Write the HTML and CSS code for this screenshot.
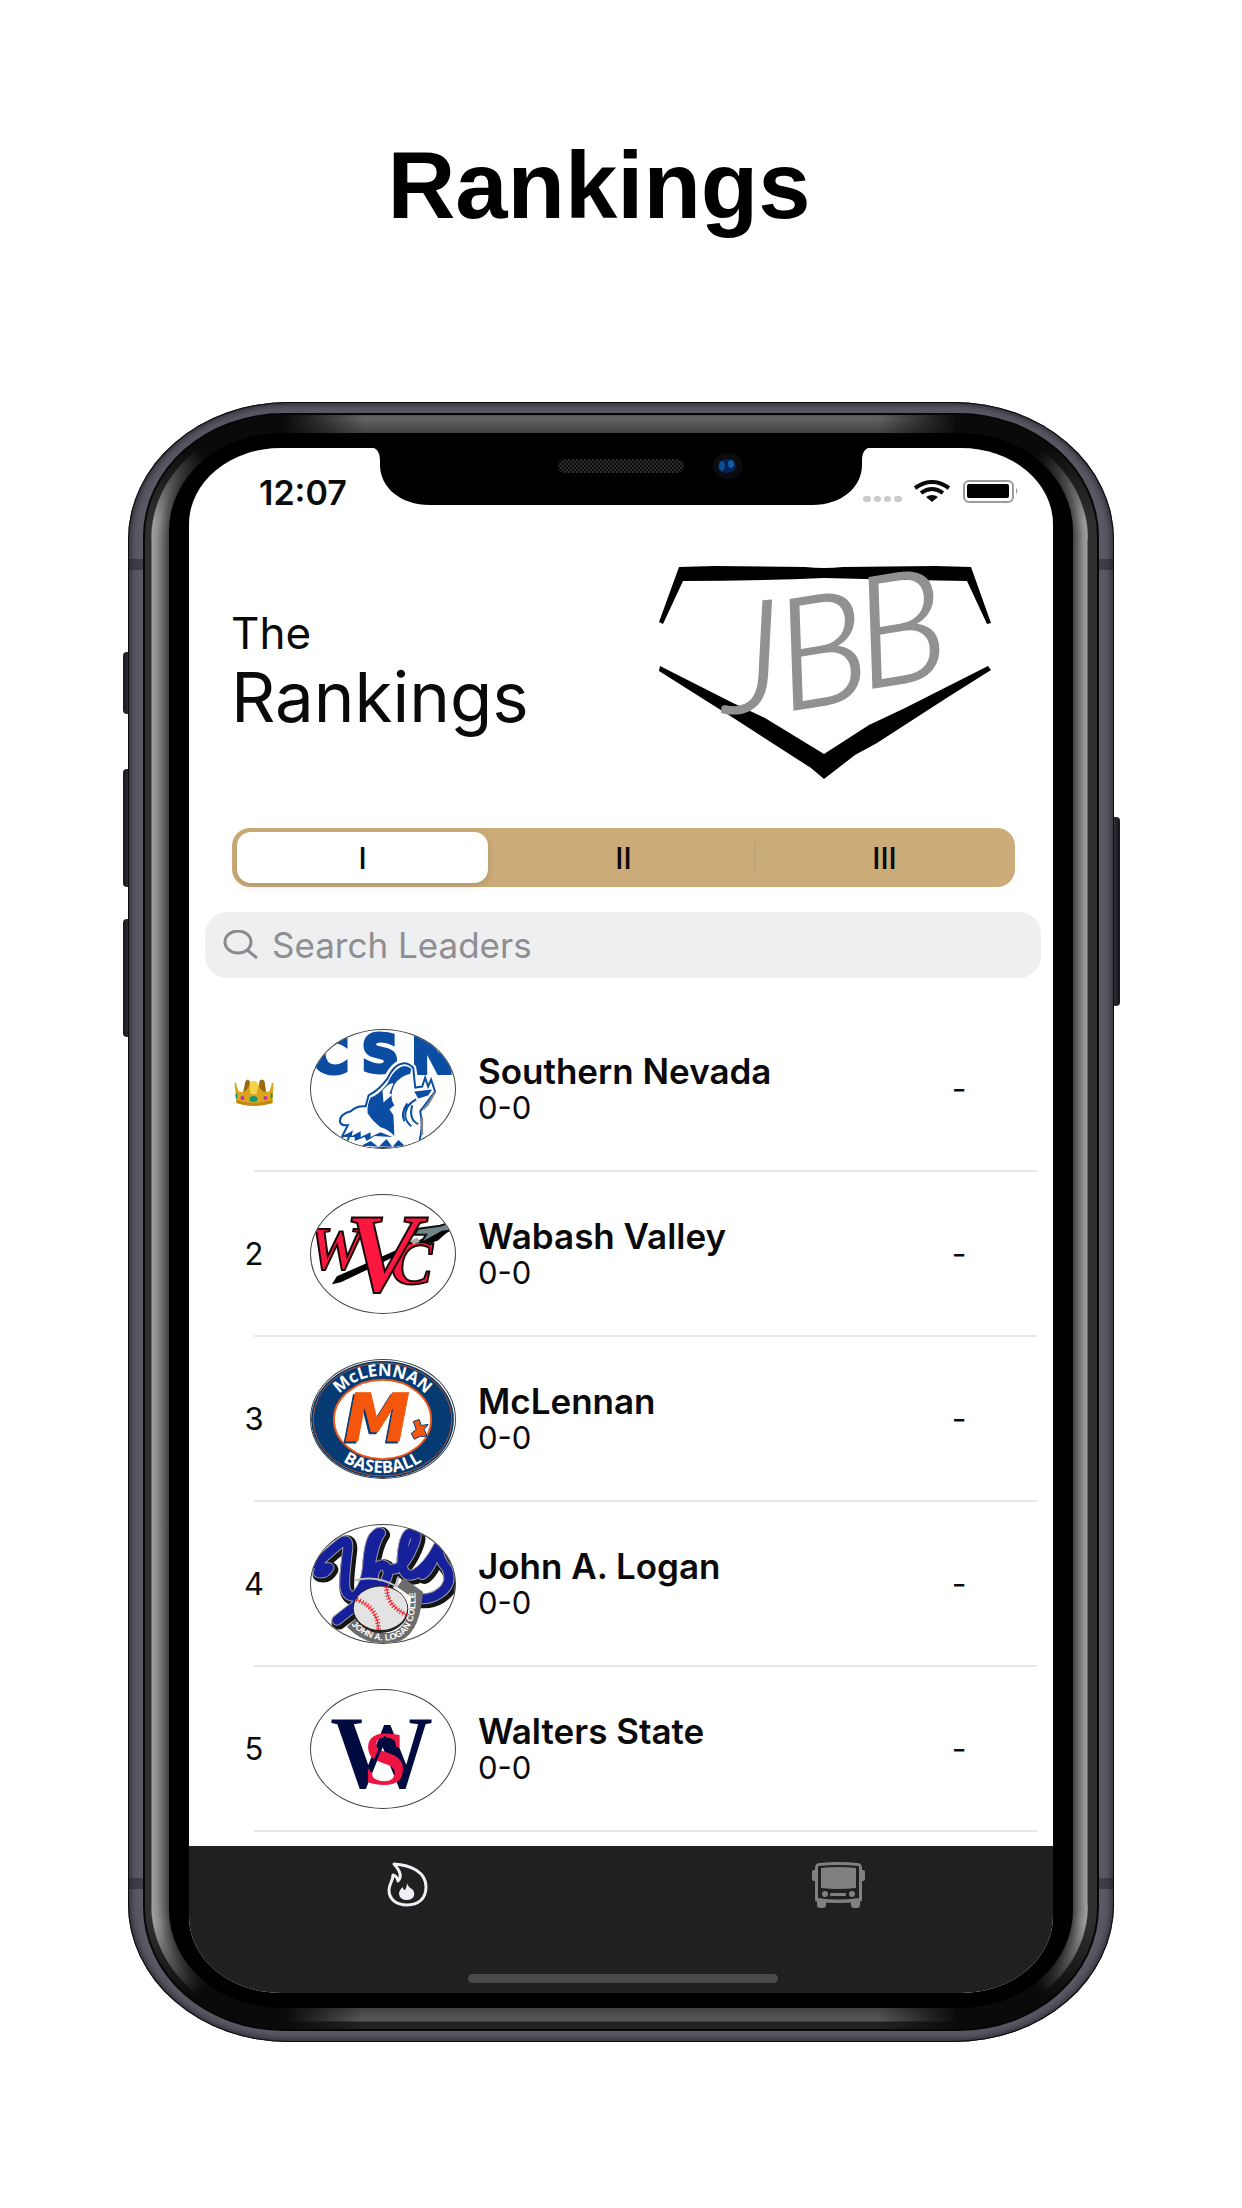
FILE: index.html
```html
<!DOCTYPE html>
<html lang="en">
<head>
<meta charset="utf-8">
<meta name="viewport" content="width=device-width, initial-scale=1">
<title>Rankings</title>
<link rel="stylesheet" href="styles.css">
</head>
<body>
<main class="stage">
  <h1 class="headline">Rankings</h1>
  <div class="phone">
    <span class="key key-mute"></span>
    <span class="key key-up"></span>
    <span class="key key-down"></span>
    <span class="key key-power"></span>
    <div class="metal">
      <span class="antenna antenna-top"></span>
      <span class="antenna antenna-bottom"></span>
      <div class="rim">
        <div class="bezel">
          <div class="screen">
            <svg class="notch" viewBox="0 0 506 58" aria-hidden="true">
              <defs>
                <pattern id="mesh" width="4" height="4" patternUnits="userSpaceOnUse">
                  <rect width="4" height="4" fill="#0c0c0c"/>
                  <rect width="2" height="2" fill="#2c2c2c"/>
                  <rect x="2" y="2" width="2" height="2" fill="#2c2c2c"/>
                </pattern>
              </defs>
              <path d="M0 0C8 0 12 4 12 14V18C12 40 32 58 62 58H444C474 58 494 40 494 18V14C494 4 498 0 506 0Z"/>
              <rect x="190" y="12" width="126" height="14" rx="7" fill="url(#mesh)"/>
              <ellipse cx="360" cy="19" rx="15" ry="13" fill="#0a0c10"/>
              <ellipse cx="359" cy="19" rx="9" ry="7" fill="#04224f"/>
              <ellipse cx="354" cy="19" rx="3" ry="5" fill="#0a4f96"/>
              <ellipse cx="363" cy="17" rx="3" ry="4" fill="#0d5cae"/>
            </svg>
            <header class="status">
              <time class="clock">12:07</time>
              <svg class="status-icons" viewBox="0 0 156 24" aria-hidden="true">
                <g fill="#cbcbcb">
                  <rect x="0" y="16" width="8" height="6" rx="3"/>
                  <rect x="11" y="16" width="7" height="6" rx="3"/>
                  <rect x="21" y="16" width="7" height="6" rx="3"/>
                  <rect x="31" y="16" width="8" height="6" rx="3"/>
                </g>
                <g fill="none" stroke="#0a0a0a" stroke-width="4">
                  <path d="M52 8Q69 -4 86 8"/>
                  <path d="M58 13Q69 5 80 13"/>
                </g>
                <path d="M63 17Q69 13 75 17L69 22Z" fill="#0a0a0a"/>
                <rect x="101" y="1" width="49" height="21" rx="5" fill="none" stroke="#9b9b9b" stroke-width="2"/>
                <rect x="104" y="4" width="42" height="14" rx="2"/>
                <path d="M153 8Q156 11 153 14Z" fill="#9b9b9b"/>
              </svg>
            </header>

            <section class="masthead">
              <h2 class="title"><span class="title-small">The</span> <span class="title-large">Rankings</span></h2>
              <svg class="brand" viewBox="0 0 340 216" role="img" aria-label="JBB">
                <path d="M24 2L60 1L150 2Q169 4 188 2L280 1L316 2L336 58L332 59L312 16Q240 15 169 13Q100 16 28 16L8 59L4 57Z"/>
                <path d="M5 101L78 138L110 153L169 189L214 160L250 143L333 101L336 105L290 134L222 178L200 190L169 214L156 203L80 154L4 106Z"/>
                <g class="brand-letters">
                  <text x="70" y="148" transform="rotate(-4 70 148)">J</text>
                  <text x="130" y="146" transform="rotate(-9 130 146)">B</text>
                  <text x="209" y="124" transform="rotate(-9 209 124)">B</text>
                </g>
              </svg>
            </section>

            <fieldset class="segments">
              <legend class="hidden">Division</legend>
              <label class="segment"><input type="radio" name="division" checked><span>I</span></label>
              <label class="segment"><input type="radio" name="division"><span>II</span></label>
              <label class="segment"><input type="radio" name="division"><span>III</span></label>
            </fieldset>

            <label class="search">
              <svg class="search-icon" viewBox="0 0 36 30" aria-hidden="true">
                <ellipse cx="15" cy="12" rx="13" ry="11"/>
                <path d="M24 20L34 28"/>
              </svg>
              <input type="search" placeholder="Search Leaders" aria-label="Search Leaders">
            </label>

            <ol class="teams">
              <li class="team">
                <span class="rank">
                  <svg class="crown" viewBox="0 0 41 28" role="img" aria-label="1">
                    <path d="M9 17L12 3Q15 0 16 3L19 13L25 13L26 3Q28 0 31 3L33 17Z" fill="#9a6a10"/>
                    <path d="M1 5Q3 4 3 7L5 13Q12 17 16 7Q17 3 20 3Q23 3 25 7Q29 17 36 13L38 7Q38 4 40 5L39 25Q20 31 3 25Z" fill="#dca51c"/>
                    <path d="M16 7Q17 3 20 3Q23 3 25 7L23 16H17Z" fill="#f8d44a"/>
                    <path d="M3 22Q20 28 39 22V25Q20 31 3 25Z" fill="#c08712"/>
                    <ellipse cx="20" cy="21" rx="4" ry="3" fill="#0f9a78"/>
                    <circle cx="9" cy="20" r="2" fill="#c22bb0"/><circle cx="32" cy="20" r="2" fill="#c22bb0"/>
                    <ellipse cx="3" cy="18" rx="1" ry="3" fill="#0f9a78"/><ellipse cx="38" cy="18" rx="1" ry="3" fill="#0f9a78"/>
                  </svg>
                </span>
                <svg class="logo" viewBox="0 0 145 119" role="img" aria-label="Southern Nevada logo">
                  <g class="csn"><text x="0" y="43">C</text><text x="51" y="42">S</text><text x="101" y="43">N</text></g>
                  <path d="M91 33Q83 35 76 49Q68 60 57 65L54 76Q46 76 40 82Q28 84 28 93Q28 98 35 98L30 108L40 104L36 114L50 119H108L111 80L124 60L121 50L117 58L115 47L112 56L106 58L103 38Q97 31 91 33Z" fill="#fff" stroke="#fff" stroke-width="6"/>
                  <path d="M91 34Q83 36 77 49Q69 60 58 66L55 77Q46 76 40 82Q29 85 29 92Q30 97 37 96L31 108L40 104L36 113L50 119H107Q114 100 110 82L125 62L121 50L118 57L115 48L112 57L105 58L103 38Q97 32 91 34Z" fill="#fff" stroke="#0b4da2" stroke-width="2"/>
                  <path d="M89 38Q82 42 77 54Q68 66 60 68Q56 76 57 84Q62 92 70 98Q78 100 84 107L83 86L79 80L84 76Q78 68 84 55Q90 46 100 44L101 39Q95 34 89 38Z" fill="#0b4da2"/>
                  <path d="M72 61Q80 52 83 54L79 64L82 65L73 73ZM32 89Q38 82 47 86L54 90L41 93Z" fill="#fff"/>
                  <path d="M104 62L122 60L118 66L108 69Z" fill="#0b4da2"/>
                  <path d="M106 70Q94 76 95 88Q97 94 101 97M97 74Q90 84 94 92M102 76Q98 90 108 95" fill="none" stroke="#0b4da2" stroke-width="2"/>
                  <path d="M33 108L42 101L41 107L50 102L50 108L60 103L60 108L70 103L82 108L64 107L56 112L54 108L44 112L44 108ZM50 117L60 112L68 118L76 110L82 118L88 111L96 118Z" fill="#0b4da2"/>
                  <path d="M125 63L118 75L113 80M112 88V106" fill="none" stroke="#888" stroke-width="2"/>
                </svg>
                <div class="details"><h3 class="name">Southern Nevada</h3><p class="record">0-0</p></div>
                <span class="move">-</span>
              </li>
              <li class="team">
                <span class="rank">2</span>
                <svg class="logo" viewBox="0 0 145 119" role="img" aria-label="Wabash Valley logo">
                  <path d="M21 90L26 82L128 37L118 46L30 88Z"/>
                  <g class="wvc">
                    <text x="-3" y="75" font-size="62">W</text>
                    <text x="80" y="90" font-size="64">C</text>
                    <text x="34" y="97" font-size="114">V</text>
                  </g>
                  <path d="M108 34L130 31L143 27L146 32L128 42L120 50L112 46L116 40L104 40Z" fill="#6f8588" stroke="#111" stroke-width="2"/>
                  <path d="M114 46L132 36L140 35L128 46L118 49Z"/>
                  <path d="M100 46L107 43L110 47L103 50Z" fill="#aaa"/>
                </svg>
                <div class="details"><h3 class="name">Wabash Valley</h3><p class="record">0-0</p></div>
                <span class="move">-</span>
              </li>
              <li class="team">
                <span class="rank">3</span>
                <svg class="logo" viewBox="0 0 145 119" role="img" aria-label="McLennan Baseball logo">
                  <defs>
                    <path id="ring-top" d="M19 60A53 44 0 0 1 125 60"/>
                    <path id="ring-bottom" d="M8 60A64 54 0 0 0 136 60"/>
                  </defs>
                  <ellipse cx="72" cy="60" rx="72" ry="59" fill="#053a73"/>
                  <ellipse cx="72" cy="60" rx="70" ry="57" fill="none" stroke="#b8542a" stroke-width="1"/>
                  <ellipse cx="72" cy="60" rx="49" ry="40" fill="#fff" stroke="#e8561a" stroke-width="2"/>
                  <g class="ring-text">
                    <text><textPath href="#ring-top" startOffset="50%">McLENNAN</textPath></text>
                    <text><textPath href="#ring-bottom" startOffset="50%">BASEBALL</textPath></text>
                  </g>
                  <g class="letter-m">
                    <text x="32" y="84" fill="#053a73" stroke="#053a73">M</text>
                    <text x="34" y="82" fill="#f4570b" stroke="#f4570b">M</text>
                  </g>
                  <path d="M103 62L109 60L111 66L118 65L114 70L117 77L110 77L104 80L101 74L106 70Z" fill="#f4570b" stroke="#053a73" stroke-width="1"/>
                </svg>
                <div class="details"><h3 class="name">McLennan</h3><p class="record">0-0</p></div>
                <span class="move">-</span>
              </li>
              <li class="team">
                <span class="rank">4</span>
                <svg class="logo" viewBox="0 0 145 119" role="img" aria-label="John A. Logan College Vols logo">
                  <defs>
                    <path id="badge" d="M39 99Q58 119 80 116Q108 111 105 66"/>
                    <path id="vols" d="M7 48Q14 50 18 43Q4 44 7 38Q20 26 30 18Q38 12 37 24Q34 48 34 56Q33 72 43 72Q54 66 57 42Q58 20 63 12Q68 6 70 8Q62 20 58 52Q54 72 44 82L26 96M64 62Q60 42 72 40Q82 44 74 58Q68 66 64 58M78 44Q90 48 100 28Q110 8 103 8Q94 6 92 30Q90 54 104 50Q118 42 128 22Q120 46 112 50M128 22Q128 34 137 44Q144 60 128 70Q118 76 106 74"/>
                  </defs>
                  <g fill="none" stroke-linecap="round" stroke-linejoin="round">
                    <use href="#vols" x="2" y="2" stroke="#151515" stroke-width="15"/>
                    <use href="#vols" stroke="#9a9aa4" stroke-width="11"/>
                    <use href="#vols" stroke="#17209b" stroke-width="9"/>
                  </g>
                  <path d="M40 99Q58 117 80 114Q104 111 107 70L90 58" fill="none" stroke="#6c6c6c" stroke-width="11"/>
                  <ellipse cx="70" cy="85" rx="28" ry="24" fill="#222"/>
                  <ellipse cx="70" cy="84" rx="27" ry="22" fill="#e3e3e3"/>
                  <path d="M46 75Q68 84 68 106M76 62Q76 82 97 91" fill="none" stroke="#f01824" stroke-width="1"/>
                  <path d="M46 75Q68 84 68 106M76 62Q76 82 97 91" fill="none" stroke="#f01824" stroke-width="5" stroke-dasharray="1 2"/>
                  <path d="M44 56Q66 50 86 62L88 52" fill="none" stroke="#bdbdc4" stroke-width="2"/>
                  <text class="badge-text"><textPath href="#badge" startOffset="2">JOHN A. LOGAN COLLEGE</textPath></text>
                </svg>
                <div class="details"><h3 class="name">John A. Logan</h3><p class="record">0-0</p></div>
                <span class="move">-</span>
              </li>
              <li class="team">
                <span class="rank">5</span>
                <svg class="logo" viewBox="0 0 145 119" role="img" aria-label="Walters State logo">
                  <g class="ws">
                    <text x="19" y="98" font-size="104" fill="#020b40">W</text>
                    <text x="53" y="95" font-size="77" fill="#ee1543">S</text>
                  </g>
                  <path d="M60 82L75 47" stroke="#020b40" stroke-width="3"/>
                </svg>
                <div class="details"><h3 class="name">Walters State</h3><p class="record">0-0</p></div>
                <span class="move">-</span>
              </li>
            </ol>

            <footer class="dock">
              <nav class="tabs">
                <a class="tab" href="#rankings" aria-label="Rankings">
                  <svg width="42" height="46" viewBox="0 0 42 46" aria-hidden="true">
                    <path d="M7 2C24 3 39 10 39 25C39 37 31 43 20 43C9 43 2 37 2 28C2 22 6 19 6 13Q10 14 11 19Q17 13 7 2Z" fill="none" stroke="#f4eef6" stroke-width="3" stroke-linejoin="round"/>
                    <path d="M20 21Q21 25 25 27Q28 30 27 34Q25 38 20 38Q13 38 12 32Q12 28 16 25Q16 28 18 28Q20 25 20 21Z" fill="#f4eef6"/>
                  </svg>
                </a>
                <a class="tab" href="#schedule" aria-label="Schedule">
                  <svg width="53" height="46" viewBox="0 0 53 46" aria-hidden="true" fill="#808080">
                    <path d="M3 6Q3 1 8 1Q26 -1 45 1Q50 1 50 6V38Q50 40 46 40Q26 42 7 40Q3 40 3 38Z"/>
                    <path d="M6 4Q26 2 47 4V36Q26 39 6 36Z" fill="#202020"/>
                    <path d="M9 6Q26 4 44 6V26Q26 28 9 26Z"/>
                    <rect x="0" y="8" width="5" height="11" rx="2"/><rect x="48" y="8" width="5" height="11" rx="2"/>
                    <circle cx="13" cy="32" r="3"/><circle cx="40" cy="32" r="3"/>
                    <rect x="18" y="31" width="16" height="3" rx="1"/>
                    <rect x="5" y="37" width="9" height="9" rx="3"/><rect x="39" y="37" width="9" height="9" rx="3"/>
                  </svg>
                </a>
              </nav>
              <span class="home-bar"></span>
            </footer>
          </div>
        </div>
      </div>
    </div>
  </div>
</main>
</body>
</html>
```
FILE: styles.css
```css
* {
  box-sizing: border-box;
}

body {
  margin: 0;
  background: #fff;
  color: #0a0a0a;
  font-family: Inter, "Liberation Sans", sans-serif;
}

.stage {
  padding: 134px 128px 160px;
}

.headline {
  margin: 0 44px 164px 0;
  font: bold 94px/104px "Liberation Sans", sans-serif;
  color: #000;
  text-align: center;
}

/* Handset: metal band, glossy rim, black bezel, screen */
.phone {
  position: relative;
}

.metal {
  position: relative;
  padding: 13px 17px;
  border-radius: 160px / 138px;
  background: #5a5a65;
  box-shadow: inset 0 0 0 1px #0d0d10, inset 0 0 9px 1px #17171c;
}

.antenna {
  position: absolute;
  left: 1px;
  right: 1px;
  height: 11px;
  background: rgba(20, 20, 30, 0.4);
}

.antenna-top {
  top: 157px;
}

.antenna-bottom {
  bottom: 153px;
}

.rim {
  position: relative;
  padding: 18px 24px 21px;
  border-radius: 138px / 122px;
  box-shadow: 0 0 0 2px #060606;
  background:
    conic-gradient(from 270deg at 100% 100%, transparent 0 8deg, #0a0a0a 46deg 90deg, transparent 90deg) 0 0 / 140px 124px,
    conic-gradient(from 0deg at 0 100%, #0a0a0a 0 44deg, transparent 82deg) 100% 0 / 140px 124px,
    conic-gradient(from 180deg at 100% 0, #0a0a0a 0 44deg, transparent 82deg) 0 100% / 140px 124px,
    conic-gradient(from 90deg at 0 0, transparent 0 8deg, #0a0a0a 46deg 90deg, transparent 90deg) 100% 100% / 140px 124px,
    radial-gradient(ellipse 140px 124px at 100% 100%, #424242 83%, #8c8c8c 91%, #a0a0a0 95%, #2f2f2f 96%) 0 0 / 140px 124px,
    radial-gradient(ellipse 140px 124px at 0 100%, #424242 83%, #8c8c8c 90%, #a0a0a0 93%, #2f2f2f 94%) 100% 0 / 140px 124px,
    radial-gradient(ellipse 140px 124px at 100% 0, #424242 83%, #8c8c8c 91%, #a0a0a0 95%, #2f2f2f 96%) 0 100% / 140px 124px,
    radial-gradient(ellipse 140px 124px at 0 0, #424242 83%, #8c8c8c 90%, #a0a0a0 93%, #2f2f2f 94%) 100% 100% / 140px 124px,
    linear-gradient(90deg, #0a0a0a, transparent 80px calc(100% - 80px), #0a0a0a) 50% 0 / calc(100% - 278px) 100%,
    linear-gradient(180deg, #555 0, #646464 3px, #424242 18px, #000 19px) 50% 0 / calc(100% - 278px) 19px,
    linear-gradient(0deg, #222 0 7px, #5a5a5a 8px, #424242 21px) 50% 100% / calc(100% - 278px) 21px,
    linear-gradient(90deg, #2f2f2f 0 6px, #a0a0a0 7px, #8c8c8c 12px, #424242 24px) 0 0 / 24px 100%,
    linear-gradient(270deg, #2f2f2f 0 9px, #a0a0a0 10px, #8c8c8c 14px, #424242 24px) 100% 0 / 24px 100%;
  background-repeat: no-repeat;
  background-color: #000;
}

.bezel {
  padding: 15px 20px;
  border-radius: 112px / 98px;
  background: #000;
}

.screen {
  position: relative;
  overflow: hidden;
  border-radius: 92px / 76px;
  background: #fff;
}

.key {
  position: absolute;
  left: -5px;
  width: 12px;
  border-radius: 4px;
  background: linear-gradient(90deg, #15151a, #4a4a54);
}

.key-mute {
  top: 250px;
  height: 62px;
}

.key-up {
  top: 367px;
  height: 118px;
}

.key-down {
  top: 517px;
  height: 118px;
}

.key-power {
  top: 415px;
  right: -6px;
  left: auto;
  height: 189px;
  background: linear-gradient(270deg, #15151a, #4a4a54);
}

.notch {
  position: absolute;
  top: -1px;
  left: calc(50% - 253px);
  width: 506px;
  height: 58px;
}

/* Status bar */
.status {
  display: flex;
  align-items: center;
  justify-content: space-between;
  height: 90px;
  padding: 0 34px 0 70px;
}

.clock {
  font-size: 34px;
  font-weight: 600;
  line-height: 40px;
}

.status-icons {
  width: 156px;
  height: 24px;
  margin-bottom: 2px;
}

/* Title and brand mark */
.masthead {
  display: flex;
  align-items: flex-start;
  justify-content: space-between;
  padding: 27px 58px 47px 42px;
}

.title {
  display: flex;
  flex-direction: column;
  margin: 40px 0 0;
  font-weight: 400;
}

.title-small {
  font-size: 44px;
  line-height: 56px;
}

.title-large {
  font-size: 69px;
  line-height: 72px;
}

.brand {
  width: 340px;
  height: 216px;
}

.brand-letters {
  font: italic 300 154px Lato, sans-serif;
  fill: #919191;
  stroke: #919191;
  stroke-width: 2px;
}

/* Division switch */
.segments {
  display: grid;
  grid-template-columns: repeat(3, 1fr);
  height: 59px;
  margin: 0 38px 25px 43px;
  padding: 0;
  border: 0;
  border-radius: 18px;
  background: #cbac78;
}

.segment {
  position: relative;
  display: flex;
}

.segment input {
  position: absolute;
  opacity: 0;
}

.segment span {
  display: flex;
  flex: 1;
  align-items: center;
  justify-content: center;
  margin: 4px 5px;
  border-radius: 14px;
  font-size: 30px;
  font-weight: 500;
}

.segment input:checked + span {
  background: #fff;
  box-shadow: 0 3px 8px rgba(0, 0, 0, 0.12);
}

.segment:last-child::before {
  content: "";
  position: absolute;
  top: 13px;
  left: 0;
  width: 2px;
  height: 33px;
  background: #bfa47c;
}

.hidden {
  position: absolute;
  width: 1px;
  height: 1px;
  overflow: hidden;
  clip-path: inset(50%);
}

/* Search */
.search {
  display: flex;
  align-items: center;
  gap: 13px;
  height: 66px;
  margin: 0 12px 29px 16px;
  padding: 0 18px;
  border-radius: 22px;
  background: #eeeff1;
}

.search-icon {
  width: 36px;
  height: 30px;
  fill: none;
  stroke: #8a8a8e;
  stroke-width: 3px;
}

.search input {
  flex: 1;
  min-width: 0;
  padding: 0;
  border: 0;
  outline: 0;
  background: transparent;
  color: #0a0a0a;
  font: 400 35px/44px Inter, "Liberation Sans", sans-serif;
}

.search input::placeholder {
  color: #8e8e93;
  opacity: 1;
}

/* Ranked teams */
.teams {
  margin: 0 16px 14px 65px;
  padding: 0;
  list-style: none;
}

.team {
  display: flex;
  align-items: center;
  height: 165px;
  border-bottom: 2px solid #e6e6e6;
}

.rank {
  display: flex;
  flex: none;
  justify-content: center;
  width: 60px;
  margin-left: -30px;
  font-size: 31px;
  line-height: 36px;
}

.crown {
  width: 42px;
  height: 28px;
  margin-top: 6px;
}

.logo {
  flex: none;
  width: 146px;
  height: 120px;
  margin-left: 26px;
  border: 1px solid #444;
  border-radius: 50%;
  overflow: hidden;
}

.details {
  flex: 1;
  margin-left: 22px;
}

.name {
  margin: 0;
  font-size: 35px;
  font-weight: 600;
  line-height: 38px;
}

.record {
  margin: 0;
  font-size: 31px;
  line-height: 36px;
}

.move {
  width: 60px;
  margin-right: 48px;
  font-size: 32px;
  line-height: 36px;
  text-align: center;
}

.csn {
  font: bold 52px "DejaVu Sans", sans-serif;
  fill: #0b4da2;
  stroke: #0b4da2;
  stroke-width: 4px;
}

.wvc {
  font-family: "Liberation Serif", serif;
  font-style: italic;
  font-weight: bold;
  fill: #fb1740;
  stroke: #160808;
  stroke-width: 2px;
}

.ring-text {
  font: bold 17px "Open Sans", "Liberation Sans", sans-serif;
  fill: #fff;
  text-anchor: middle;
}

.letter-m {
  font: italic bold 66px "DejaVu Sans", sans-serif;
  stroke-width: 1px;
}

.badge-text {
  font: bold 9px "Liberation Sans", sans-serif;
  fill: #fff;
}

.ws {
  font-family: "Liberation Serif", serif;
  font-weight: bold;
}

/* Bottom bar */
.dock {
  display: flex;
  flex-direction: column;
  align-items: center;
  justify-content: space-between;
  height: 147px;
  padding: 16px 0 10px 4px;
  background: #202020;
}

.tabs {
  display: grid;
  grid-template-columns: repeat(2, 1fr);
  width: 100%;
}

.tab {
  display: flex;
  justify-content: center;
}

.home-bar {
  width: 310px;
  height: 9px;
  border-radius: 5px;
  background: #4b4b4b;
}
```
